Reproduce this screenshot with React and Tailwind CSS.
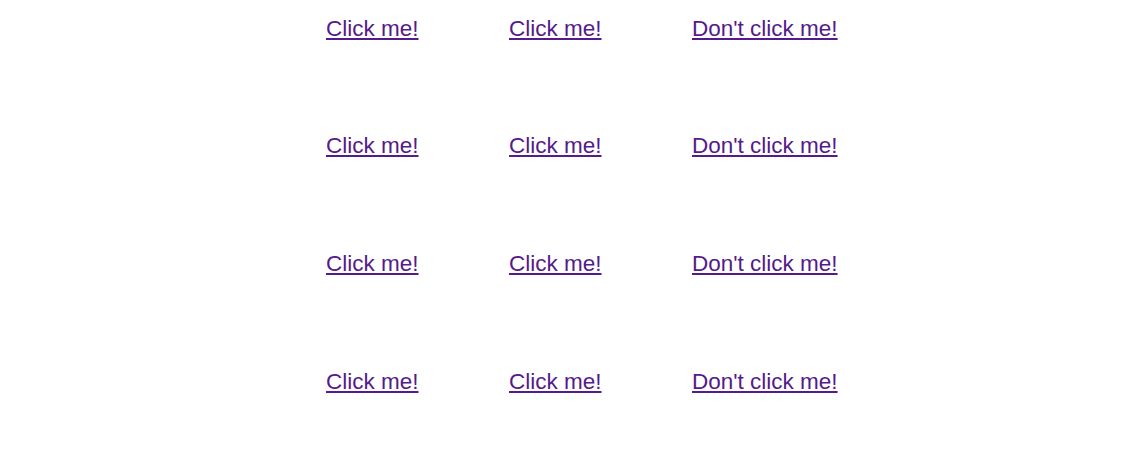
import React from 'react';

const rows = [0, 1, 2, 3];

const App = () => {
  return (
    <div className="min-h-screen bg-white pt-[15.7px] pl-[326px] font-['Liberation_Sans',Arial,sans-serif]">
      <div className="grid grid-cols-[183px_183px_183px] gap-y-[91.67px]">
        {rows.map((r) => (
          <React.Fragment key={r}>
            <div className="text-[22.5px] leading-[26px]">
              <a href="#" className="text-[#551a8b] underline">Click me!</a>
            </div>
            <div className="text-[22.5px] leading-[26px]">
              <a href="#" className="text-[#551a8b] underline">Click me!</a>
            </div>
            <div className="text-[22.5px] leading-[26px]">
              <a href="#" className="text-[#551a8b] underline">Don't click me!</a>
            </div>
          </React.Fragment>
        ))}
      </div>
    </div>
  );
};

export default App;
